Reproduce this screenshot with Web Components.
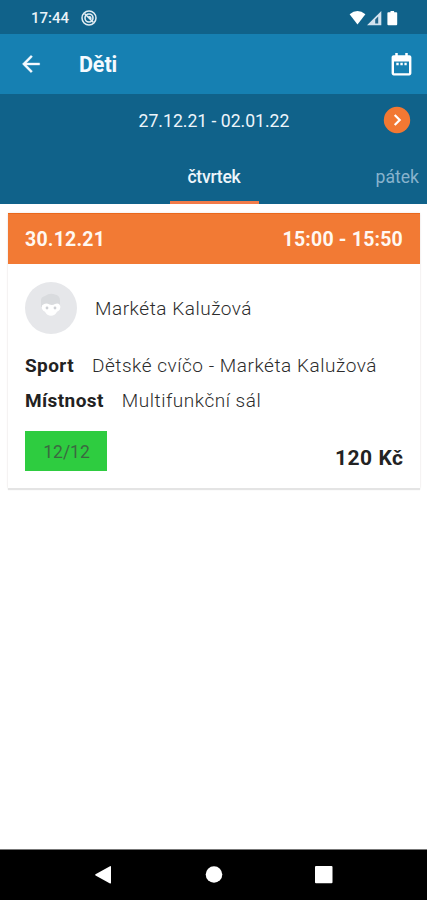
<!DOCTYPE html>
<html lang="cs">
<head>
<meta charset="utf-8">
<meta name="viewport" content="width=device-width, initial-scale=1">
<title>Děti</title>
<style>
  html, body { height: 100%; }
  body {
    margin: 0;
    overflow: hidden;
    background: #fff;
    font-family: Roboto, "Liberation Sans", sans-serif;
  }
</style>
</head>
<body>
<kids-app>
  <status-bar slot="top" time="17:44"></status-bar>
  <app-header slot="top">Děti</app-header>
  <week-bar slot="top">27.12.21 - 02.01.22</week-bar>
  <day-tabs slot="top">
    <span slot="current">čtvrtek</span>
    <span slot="next">pátek</span>
  </day-tabs>
  <lesson-card>
    <span slot="date">30.12.21</span>
    <span slot="time">15:00 - 15:50</span>
    <span slot="person">Markéta Kalužová</span>
    <lesson-row label="Sport">Dětské cvíčo - Markéta Kalužová</lesson-row>
    <lesson-row label="Místnost">Multifunkční sál</lesson-row>
    <span slot="capacity">12/12</span>
    <span slot="price">120 Kč</span>
  </lesson-card>
  <nav-bar slot="bottom"></nav-bar>
</kids-app>

<script>
class BaseElement extends HTMLElement {
  connectedCallback() {
    if (this.shadowRoot) return;
    this.attachShadow({ mode: "open" }).innerHTML = this.render();
  }
}

class KidsApp extends BaseElement {
  render() {
    return `
    <style>
      :host { display: flex; flex-direction: column; height: 100vh; }
      main { flex: 1; padding: 9px 7px 0 8px; }
    </style>
    <header><slot name="top"></slot></header>
    <main><slot></slot></main>
    <slot name="bottom"></slot>
    `;
  }
}

class StatusBar extends BaseElement {
  render() {
    return `
    <style>
      :host {
        display: flex;
        align-items: center;
        height: 34px;
        box-sizing: border-box;
        padding: 1px 28px 0 31px;
        background: #10628a;
        color: #e9f2f8;
        font-size: 15px;
        font-weight: 500;
      }
      svg { display: block; }
      .badge { margin-left: 12px; }
      .system { margin-left: auto; }
    </style>
    <span>${this.getAttribute("time")}</span>
    <svg class="badge" width="16" height="16" viewBox="0 0 16 16" fill="none" stroke="#e3edf3">
      <circle cx="8" cy="8" r="7" stroke-width="1.5"/>
      <circle cx="8" cy="8" r="4" stroke-width="1.6"/>
      <path d="M3.500 3.500l9 9M7.500 6.500l2 .5.500 2" stroke-width="1.500"/>
    </svg>
    <svg class="system" width="50" height="16" viewBox="0 0 50 16">
      <path d="M.6 4.300Q8.500-2.400 16.400 4.300L8.500 14.500z" fill="#fff"/>
      <path d="M18 15.200L32.300 1v14.200z" fill="#d3e2ee"/>
      <path d="M26.200 9.500L29.200 6.500v7h-3z" fill="#23668b"/>
      <path d="M39.300 2.200h2.200V1h3.600v1.200h2.200q.9 0 .9.900v11.200q0 .9-.9.900h-8q-.9 0-.9-.9V3.100q0-.9.900-.9z" fill="#fff"/>
    </svg>
    `;
  }
}

class AppHeader extends BaseElement {
  render() {
    return `
    <style>
      :host {
        display: flex;
        align-items: center;
        height: 60px;
        box-sizing: border-box;
        padding: 0 13px 0 18px;
        background: #1680b2;
        color: #f5faff;
        font-size: 21.5px;
        font-weight: 700;
      }
      h1 { margin: 0 auto 0 35px; padding-top: 1px; font: inherit; letter-spacing: -.1px; }
      svg { display: block; }
    </style>
    <svg width="26" height="26" viewBox="0 0 24 24" fill="#f5faff" stroke="#f5faff" stroke-width=".3">
      <path d="M20 11H7.830l5.590-5.590L12 4l-8 8 8 8 1.410-1.410L7.830 13H20v-2z"/>
    </svg>
    <h1><slot></slot></h1>
    <svg width="25" height="25" viewBox="0 0 24 24" fill="#fff">
      <path d="M19.500 3H18V1h-2.400v2H8.400V1H6v2H4.500c-1.100 0-2 .9-2 2v15.500c0 1.100.9 2 2 2h15c1.100 0 2-.9 2-2V5c0-1.100-.9-2-2-2zm-.3 17.300H4.800V9h14.400v11.300zM7 10.400h2.300v2.300H7zm3.900 0h2.300v2.300h-2.300zm3.900 0H17v2.300h-2.200z"/>
    </svg>
    `;
  }
}

class WeekBar extends BaseElement {
  render() {
    return `
    <style>
      :host {
        display: grid;
        grid-template-columns: 1fr auto 1fr;
        align-items: center;
        height: 54px;
        box-sizing: border-box;
        padding: 0 16px 1px;
        background: #10628a;
        color: #edf5fb;
        font-size: 17.6px;
      }
      .range { grid-column: 2; padding-left: 1px; }
      svg { display: block; justify-self: end; margin-bottom: 1px; }
    </style>
    <span class="range"><slot></slot></span>
    <svg width="28" height="28" viewBox="0 0 28 28">
      <circle cx="14" cy="14" r="13.200" fill="#f27832"/>
      <path d="M11.700 9l5 5-5 5" fill="none" stroke="#fff" stroke-width="2.200"/>
    </svg>
    `;
  }
}

class DayTabs extends BaseElement {
  render() {
    return `
    <style>
      :host {
        display: grid;
        grid-template-columns: 1fr 89px 1fr;
        height: 56px;
        padding-left: 1px;
        box-sizing: border-box;
        background: #10628a;
        color: #edf5fb;
        font-size: 17.6px;
      }
      div { box-sizing: border-box; padding-top: 19px; line-height: 20px; }
      .current {
        grid-column: 2;
        border-bottom: 3px solid #f27b49;
        text-align: center;
        font-weight: 500;
        letter-spacing: -.25px;
      }
      .next { padding-right: 8px; text-align: right; color: #88b3cd; }
    </style>
    <div class="current"><slot name="current"></slot></div>
    <div class="next"><slot name="next"></slot></div>
    `;
  }
}

class LessonCard extends BaseElement {
  render() {
    return `
    <style>
      :host {
        display: block;
        height: 275px;
        background: #fff;
        box-shadow: 0 2px 1px #e4e4e4, 0 0 2px #e8e4e2;
        color: #2c2c2c;
        font-size: 19px;
        font-weight: 300;
        letter-spacing: .53px;
      }
      .head {
        display: flex;
        align-items: center;
        justify-content: space-between;
        height: 51px;
        padding: 1px 17px 0;
        box-sizing: border-box;
        border-top: 1px solid #e9681c;
        background: #f27a34;
        color: #fff8f2;
        font-size: 19.5px;
        font-weight: 700;
        letter-spacing: .2px;
      }
      .body { padding: 18px 17px 0; }
      .person { display: flex; align-items: center; gap: 18px; margin-bottom: 14px; }
      svg { display: block; }
      .foot { display: flex; justify-content: space-between; padding-top: 13px; }
      .capacity {
        display: grid;
        place-items: center;
        width: 82px;
        height: 40px;
        padding: 1px 0 0 1px;
        box-sizing: border-box;
        background: #2ecc40;
        color: #3b6940;
        font-weight: 400;
        font-size: 17.5px;
        letter-spacing: 0;
      }
      .price { padding-top: 14px; line-height: 26px; font-size: 21px; font-weight: 700; color: #222; margin-right: -.5px; }
    </style>
    <div class="head"><slot name="date"></slot><slot name="time"></slot></div>
    <div class="body">
      <div class="person">
        <svg width="52" height="52" viewBox="0 0 52 52">
          <circle cx="26" cy="26" r="26" fill="#e6e7ea"/>
          <path d="M16 25v-7q0-3 4-4 5-3.500 10-1.500 5 1 5 6V25z" fill="#d9dbde"/>
          <path d="M17 23.500q3.500-3.500 7.500-1 3 1 5.500-.5 4-1.500 5.300 2 .6 4-3.300 5.800-2 3.900-6 3.900t-6-3.900q-4-1.800-3-6.300z" fill="#fff"/>
          <circle cx="22" cy="26" r="1.400" fill="#ced0d4"/>
          <circle cx="30" cy="26" r="1.400" fill="#ced0d4"/>
        </svg>
        <slot name="person"></slot>
      </div>
      <slot></slot>
      <div class="foot">
        <div class="capacity"><slot name="capacity"></slot></div>
        <div class="price"><slot name="price"></slot></div>
      </div>
    </div>
    `;
  }
}

class LessonRow extends BaseElement {
  render() {
    return `
    <style>
      :host {
        display: flex;
        gap: 18px;
        height: 35px;
        line-height: 35px;
        white-space: nowrap;
      }
      b { font-weight: 700; color: #222; letter-spacing: .4px; }
    </style>
    <b>${this.getAttribute("label")}</b><span><slot></slot></span>
    `;
  }
}

class NavBar extends BaseElement {
  render() {
    return `
    <style>
      :host {
        display: block;
        height: 51px;
        border-top: 1px solid #777;
        box-sizing: border-box;
        background: #000;
      }
      svg { display: block; }
    </style>
    <svg width="427" height="50" viewBox="0 0 427 50" fill="#fff">
      <path d="M95.500 24.300L110 16.200q1-.4 1 .6v16q0 1-1 .6L95.500 25.400q-.8-.5 0-1.100z"/>
      <circle cx="214" cy="24.500" r="8.300"/>
      <rect x="315" y="16" width="17.500" height="17.300" rx="1"/>
    </svg>
    `;
  }
}

customElements.define("kids-app", KidsApp);
customElements.define("status-bar", StatusBar);
customElements.define("app-header", AppHeader);
customElements.define("week-bar", WeekBar);
customElements.define("day-tabs", DayTabs);
customElements.define("lesson-card", LessonCard);
customElements.define("lesson-row", LessonRow);
customElements.define("nav-bar", NavBar);
</script>
</body>
</html>
